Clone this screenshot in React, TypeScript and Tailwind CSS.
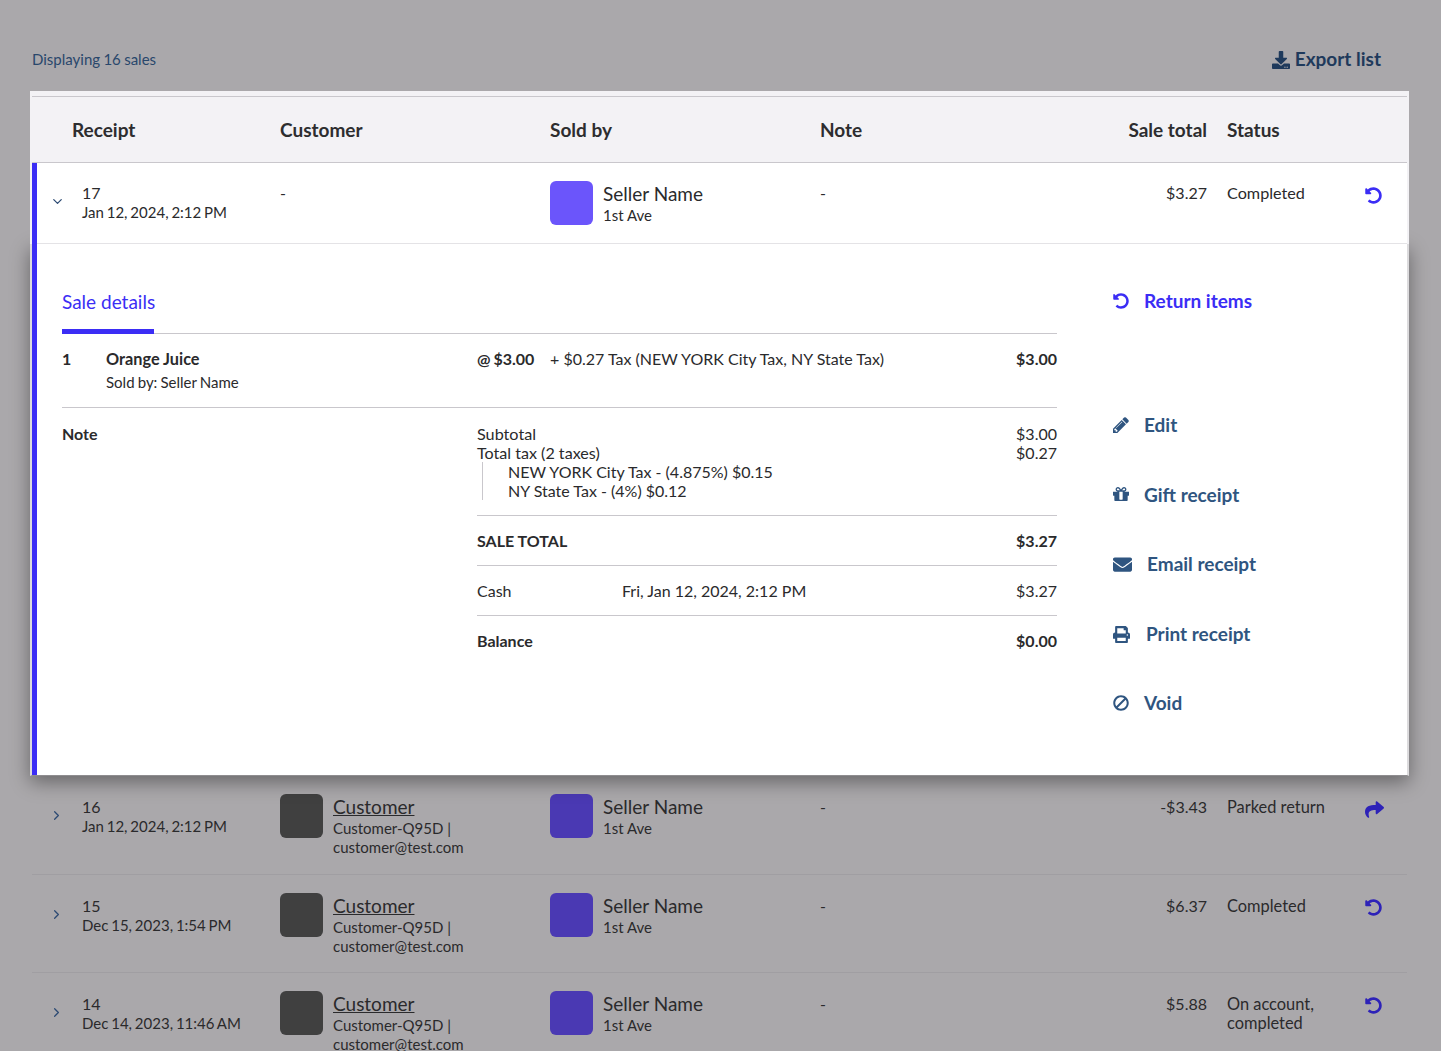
import React from "react";
import { FaUndoAlt, FaShare, FaEnvelope, FaPrint, FaBan, FaDownload } from "react-icons/fa";
import { FiChevronDown, FiChevronRight } from "react-icons/fi";

const rowGrid = "grid grid-cols-[50px_198px_270px_270px_287px_100px_158px_42px]";
const dateCls = "text-[15px] mt-[1px] [word-spacing:-1px]";

function Pencil({ size }: { size: number }) {
  return (
    <svg width={size} height={size} viewBox="0 0 1536 1536" fill="currentColor">
      <path d="M363 1408l91-91-235-235-91 91v107h128v128h107zm523-928q0-22-22-22-10 0-17 7l-542 542q-7 7-7 17 0 22 22 22 10 0 17-7l542-542q7-7 7-17zm-54-192l416 416-832 832h-416v-416zm683 96q0 53-37 90l-166 166-416-416 166-165q36-38 90-38 53 0 91 38l235 234q37 39 37 91z" />
    </svg>
  );
}

function Gift({ size }: { size: number }) {
  return (
    <svg width={size} height={size} viewBox="128 192 1536 1536" fill="currentColor">
      <path d="M1056 1356v-716h-320v716q0 25 18 38.500t46 13.500h192q28 0 46-13.500t18-38.500zm-456-844h195l-126-161q-26-31-69-31-40 0-68 28t-28 68 28 68 68 28zm688-96q0-40-28-68t-68-28q-43 0-69 31l-125 161h194q40 0 68-28t28-68zm376 256v320q0 14-9 23t-23 9h-96v416q0 40-28 68t-68 28h-1088q-40 0-68-28t-28-68v-416h-96q-14 0-23-9t-9-23v-320q0-14 9-23t23-9h440q-93 0-158.500-65.500t-65.500-158.500 65.500-158.500 158.500-65.500q107 0 168 77l128 165 128-165q61-77 168-77 93 0 158.500 65.500t65.500 158.500-65.500 158.500-158.500 65.500h440q14 0 23 9t9 23z" />
    </svg>
  );
}

function Seller() {
  return (
    <div className="flex gap-[10px]">
      <div className="w-[43px] h-[44px] rounded-[6px] bg-current shrink-0" />
      <div className="pt-[1px] text-[#2a2a2c]">
        <div className="text-[19px] leading-[24px]">Seller Name</div>
        <div className="text-[15px] leading-[19px]">1st Ave</div>
      </div>
    </div>
  );
}

function DimRow({ id, date, total, status, parked }: { id: string; date: string; total: string; status: React.ReactNode; parked?: boolean }) {
  return (
    <div className={`${rowGrid} border-b border-[#a09ea2] h-[98.7px] pt-[18px] text-[16px] leading-[19px] text-[#2a2a2c]`}>
      <div className="pt-[14px] pl-[17px] text-[#2c4a73]"><FiChevronRight size={15} /></div>
      <div className="pt-[3px]">
        <div>{id}</div>
        <div className={dateCls}>{date}</div>
      </div>
      <div className="flex gap-[10px]">
        <div className="w-[43px] h-[44px] rounded-[6px] bg-[#404040] shrink-0" />
        <div className="pt-[1px] w-[140px]">
          <div className="text-[19px] leading-[24px] underline">Customer</div>
          <div className="text-[15px] leading-[19px]">Customer-Q95D | customer@test.com</div>
        </div>
      </div>
      <div className="text-[#4a39b3]"><Seller /></div>
      <div className="pt-[3px]">-</div>
      <div className="pt-[3px] text-right">{total}</div>
      <div className="pt-[3px] pl-[20px] w-[125px] text-[16.4px]">{status}</div>
      <div className="pt-[3px] text-[#2d22b8]">
        {parked ? <FaShare size={19} className="mt-[3px]" /> : <FaUndoAlt size={17} className="mt-[3px]" />}
      </div>
    </div>
  );
}

function Action({ icon, label, gap, className }: { icon: React.ReactNode; label: string; gap: string; className: string }) {
  return (
    <div className={`flex items-center h-[22px] font-bold text-[19px] leading-[22px] ${className}`}>
      <span className={`inline-flex ${gap}`}>{icon}</span>
      <span>{label}</span>
    </div>
  );
}

export default function App() {
  return (
    <div className="h-[1051px] overflow-hidden bg-[#aaa8ab] text-[16px] text-[#2a2a2c]" style={{ fontFamily: "Lato, sans-serif" }}>
      <div className="flex justify-between items-center h-[91px] pt-[28px] pl-[32px] pr-[60px]">
        <span className="text-[15px] text-[#29476b] [word-spacing:-0.5px]">Displaying 16 sales</span>
        <span className="flex items-center gap-[5px] text-[19px] font-bold text-[#1f3a5c]">
          <FaDownload size={18} /> Export list
        </span>
      </div>

      <div className="mx-[30px] w-[1379px]">
        <div className="relative z-20 bg-[#f3f2f5] border-x-2 border-[#f3f2f5] pt-[5px]">
          <div className="grid grid-cols-[40px_208px_270px_270px_287px_100px_158px_42px] items-center h-[67px] bg-[#f3f2f5] border-y border-[#c9c7cc] text-[19px] font-bold leading-[22px] text-[#2d2d2f]">
            <div />
            <div>Receipt</div>
            <div>Customer</div>
            <div>Sold by</div>
            <div>Note</div>
            <div className="text-right">Sale total</div>
            <div className="pl-[20px]">Status</div>
            <div />
          </div>
          <div className="border-l-[5px] border-[#3b2df5] bg-white">
            <div className="grid grid-cols-[45px_198px_270px_270px_287px_100px_158px_42px] h-[81px] border-b border-[#e4e3e6] leading-[19px]">
              <div className="pt-[31px] pl-[13px] text-[#2c4a73]"><FiChevronDown size={15} /></div>
              <div className="pt-[20px]">
                <div>17</div>
                <div className={dateCls}>Jan 12, 2024, 2:12 PM</div>
              </div>
              <div className="pt-[20px]">-</div>
              <div className="pt-[18px] text-[#6b55fb]"><Seller /></div>
              <div className="pt-[20px]">-</div>
              <div className="pt-[20px] text-right">$3.27</div>
              <div className="pt-[20px] pl-[20px] text-[16.2px]">Completed</div>
              <div className="pt-[24px] text-[#3b2df5]"><FaUndoAlt size={17} /></div>
            </div>
          </div>
        </div>

        <div className="relative z-10 flex h-[532px] bg-white border-l-2 border-r-2 border-[#dcdbdd] border-b border-b-[#8f8d90] shadow-[0_6px_18px_rgba(0,0,0,0.4)]">
          <div className="w-[5px] bg-[#3b2df5]" />
          <div className="w-[1020px] pl-[25px] shrink-0">
            <div className="flex h-[90px] border-b border-[#c9c7cc]">
              <div className="h-[90px] w-[92px] pt-[46px] border-b-[5px] border-[#3b2df5] text-[19px] leading-[24px] text-[#3b2df5] whitespace-nowrap">Sale details</div>
            </div>
            <div className="flex h-[74px] border-b border-[#c9c7cc] pt-[15px] leading-[19px]">
              <div className="w-[44px] font-bold">1</div>
              <div className="w-[371px]">
                <div className="font-bold text-[16.3px]">Orange Juice</div>
                <div className="text-[15px] mt-[5px] [word-spacing:-0.7px]">Sold by: Seller Name</div>
              </div>
              <div className="w-[73px] font-bold [word-spacing:-1px]">@ $3.00</div>
              <div className="flex-1">+ $0.27 Tax (NEW YORK City Tax, NY State Tax)</div>
              <div className="font-bold">$3.00</div>
            </div>
            <div className="flex">
              <div className="w-[415px] pt-[16px] font-bold leading-[19px]">Note</div>
              <div className="flex-1 leading-[19px]">
                <div className="flex justify-between pt-[16px] h-[108px] border-b border-[#c9c7cc]">
                  <div>
                    <div className="text-[16.2px]">Subtotal</div>
                    <div className="text-[16.1px]">Total tax (2 taxes)</div>
                    <div className="ml-[5px] pl-[25px] border-l border-[#c9c7cc]">
                      <div>NEW YORK City Tax - (4.875%) $0.15</div>
                      <div>NY State Tax - (4%) $0.12</div>
                    </div>
                  </div>
                  <div className="text-right">
                    <div>$3.00</div>
                    <div>$0.27</div>
                  </div>
                </div>
                <div className="flex justify-between items-center h-[50px] border-b border-[#c9c7cc] font-bold">
                  <span>SALE TOTAL</span><span>$3.27</span>
                </div>
                <div className="flex items-center h-[50px] border-b border-[#c9c7cc]">
                  <span className="w-[145px]">Cash</span>
                  <span className="flex-1">Fri, Jan 12, 2024, 2:12 PM</span>
                  <span>$3.27</span>
                </div>
                <div className="flex justify-between items-center h-[48px] font-bold">
                  <span>Balance</span><span>$0.00</span>
                </div>
              </div>
            </div>
          </div>
          <div className="pl-[56px] pt-[46px]">
            <Action icon={<FaUndoAlt size={16} />} label="Return items" gap="mr-[15px]" className="text-[#3b2df5] mb-[102px]" />
            <Action icon={<Pencil size={16} />} label="Edit" gap="mr-[15px]" className="text-[#2f5580] mb-[48px]" />
            <Action icon={<Gift size={16} />} label="Gift receipt" gap="mr-[15px]" className="text-[#2f5580] mb-[47px]" />
            <Action icon={<FaEnvelope size={19} />} label="Email receipt" gap="mr-[15px]" className="text-[#2f5580] mb-[48px]" />
            <Action icon={<FaPrint size={17} />} label="Print receipt" gap="mr-[16px]" className="text-[#2f5580] mb-[47px]" />
            <Action icon={<FaBan size={16} className="-scale-x-100" />} label="Void" gap="mr-[15px]" className="text-[#2f5580]" />
          </div>
        </div>

        <div className="mx-[2px]">
          <DimRow id="16" date="Jan 12, 2024, 2:12 PM" total="-$3.43" status="Parked return" parked />
          <DimRow id="15" date="Dec 15, 2023, 1:54 PM" total="$6.37" status="Completed" />
          <DimRow id="14" date="Dec 14, 2023, 11:46 AM" total="$5.88" status="On account, completed" />
        </div>
      </div>
    </div>
  );
}
